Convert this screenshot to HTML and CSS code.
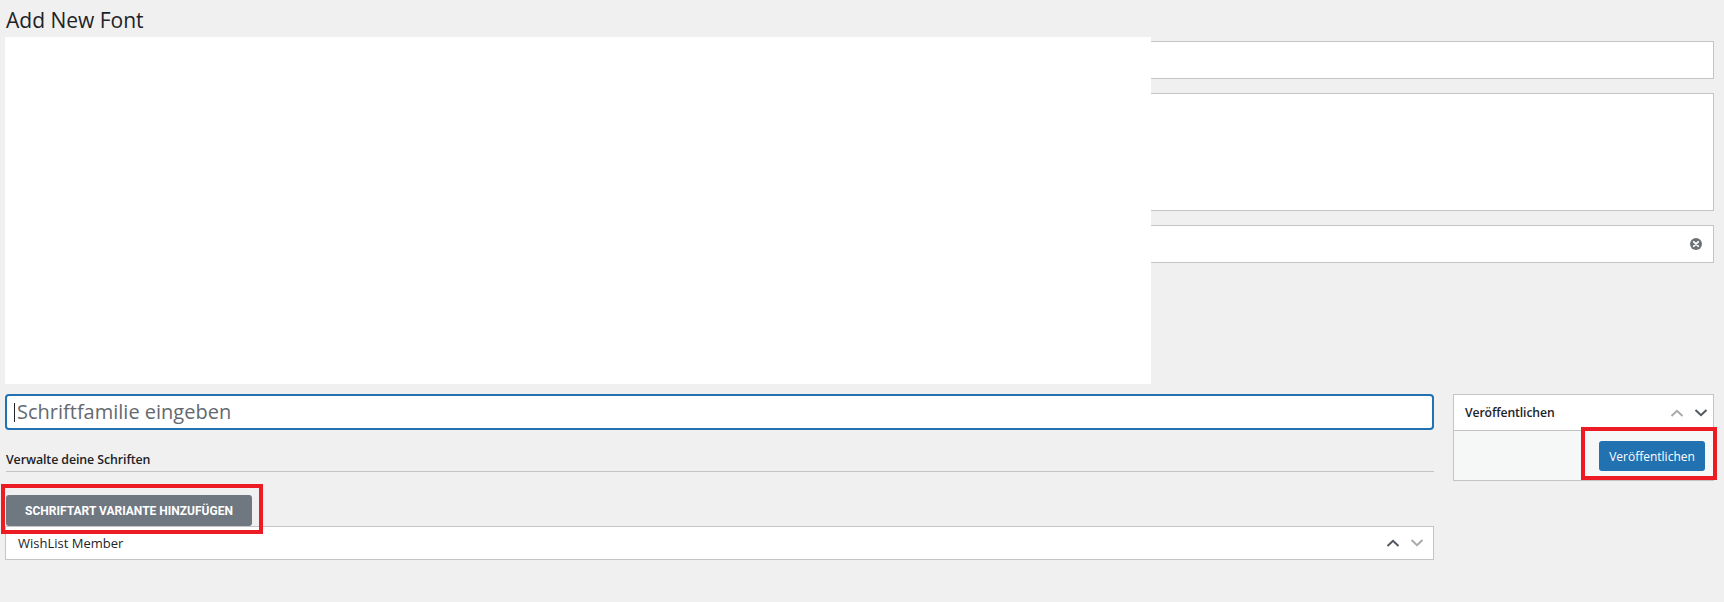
FILE: index.html
```html
<!DOCTYPE html>
<html lang="de">
<head>
    <meta charset="UTF-8">
    <title>Add New Font</title>
    <link rel="stylesheet" href="styles.css">
</head>
<body>
    <div class="wrap">
        <h1 class="page-title">Add New Font</h1>

        <div class="top-fields">
            <div class="field"></div>
            <div class="field field-area"></div>
            <div class="field field-clear">
                <span class="clear-icon">
                    <svg width="12" height="12" viewBox="0 0 12 12">
                        <circle cx="6" cy="6" r="6" fill="#6d7178"/>
                        <path d="M3.8 3.8 L8.2 8.2 M8.2 3.8 L3.8 8.2" stroke="#fff" stroke-width="1.8" stroke-linecap="round"/>
                    </svg>
                </span>
            </div>
        </div>

        <div class="columns">
            <main class="main-col">
                <div class="family">
                    <input type="text" class="family-input" placeholder="Schriftfamilie eingeben">
                    <span class="caret"></span>
                </div>

                <h2 class="section-title">Verwalte deine Schriften</h2>

                <div class="variant-row">
                    <button class="variant-button">Schriftart Variante hinzufügen</button>
                    <span class="mark mark-variant"></span>
                </div>

                <div class="postbox">
                    <span class="postbox-title">WishList Member</span>
                    <span class="toggles">
                        <svg class="chev" width="14" height="8" viewBox="0 0 14 8"><path d="M1.5 7 L7 1.8 L12.5 7" fill="none" stroke="#50575e" stroke-width="2"/></svg>
                        <svg class="chev" width="14" height="8" viewBox="0 0 14 8"><path d="M1.5 1 L7 6.2 L12.5 1" fill="none" stroke="#a7aaad" stroke-width="2"/></svg>
                    </span>
                </div>
            </main>

            <aside class="side-col">
                <div class="side-box">
                    <div class="side-head">
                        <span class="side-title">Veröffentlichen</span>
                        <span class="toggles">
                            <svg class="chev" width="14" height="8" viewBox="0 0 14 8"><path d="M1.5 7 L7 1.8 L12.5 7" fill="none" stroke="#a7aaad" stroke-width="2"/></svg>
                            <svg class="chev" width="14" height="8" viewBox="0 0 14 8"><path d="M1.5 1 L7 6.2 L12.5 1" fill="none" stroke="#50575e" stroke-width="2"/></svg>
                        </span>
                    </div>
                    <div class="side-body">
                        <button class="publish-button">Veröffentlichen</button>
                    </div>
                    <span class="mark mark-publish"></span>
                </div>
            </aside>
        </div>

        <div class="redacted"></div>
    </div>
</body>
</html>
```

FILE: styles.css
```css
body {
    margin: 0;
    padding: 0;
    background-color: #f0f0f1;
    color: #1d2327;
    font-family: 'Open Sans', 'Noto Sans', sans-serif;
    font-size: 13px;
}
.wrap {
    position: relative;
    padding: 0 10px 0 5px;
}
.page-title {
    margin: 0 0 1px 1px;
    font-size: 21px;
    font-weight: 400;
    line-height: 40px;
    color: #1d2327;
}
.top-fields {
    display: flex;
    flex-direction: column;
    gap: 14px;
}
.field {
    height: 36px;
    background-color: #fff;
    border: 1px solid #c3c4c7;
}
.field-area {
    height: 116px;
}
.field-clear {
    display: flex;
    align-items: center;
    justify-content: flex-end;
    padding-right: 11px;
}
.clear-icon {
    display: flex;
}
.columns {
    display: flex;
    gap: 19px;
    margin-top: 131px;
}
.main-col {
    flex: 1;
    display: flex;
    flex-direction: column;
}
.side-col {
    width: 261px;
}
.family {
    position: relative;
}
.family-input {
    display: block;
    box-sizing: border-box;
    width: 100%;
    height: 36px;
    margin: 0;
    padding: 0 8px 2px 10px;
    border: 2px solid #2271b1;
    border-radius: 4px;
    background-color: #fff;
    font-family: 'Open Sans', 'Noto Sans', sans-serif;
    font-size: 20px;
    outline: none;
}
.family-input::placeholder {
    color: #646970;
}
.caret {
    position: absolute;
    left: 9px;
    top: 9px;
    width: 1px;
    height: 19px;
    background-color: #1d2327;
}
.section-title {
    margin: 21px 0 0 1px;
    padding-bottom: 2px;
    border-bottom: 1px solid #c3c4c7;
    font-size: 12.4px;
    font-weight: 600;
    line-height: 18px;
    letter-spacing: -0.1px;
    color: #1d2327;
}
.variant-row {
    position: relative;
    margin-top: 23px;
    height: 31px;
}
.variant-button {
    display: block;
    width: 246px;
    height: 31px;
    margin-left: 1px;
    padding: 0;
    border: none;
    border-radius: 3px;
    background-color: #6f7780;
    color: #fff;
    font-family: 'Roboto', sans-serif;
    font-size: 12px;
    font-weight: 700;
    text-transform: uppercase;
}
.mark {
    position: absolute;
    border: 4px solid #ed1c24;
    box-sizing: border-box;
}
.mark-variant {
    left: -4px;
    top: -11px;
    width: 262px;
    height: 50px;
}
.postbox {
    display: flex;
    align-items: center;
    justify-content: space-between;
    height: 32px;
    background-color: #fff;
    border: 1px solid #c3c4c7;
    padding: 0 9px 0 12px;
}
.postbox-title {
    font-size: 13px;
    color: #1d2327;
}
.toggles {
    display: flex;
    gap: 10px;
    align-items: center;
}
.chev {
    display: block;
}
.side-box {
    position: relative;
    border: 1px solid #c3c4c7;
    background-color: #f6f7f7;
}
.side-head {
    display: flex;
    align-items: center;
    justify-content: space-between;
    height: 35px;
    padding: 0 5px 0 11px;
    background-color: #fff;
    border-bottom: 1px solid #c3c4c7;
}
.side-title {
    font-size: 12.2px;
    font-weight: 600;
    letter-spacing: -0.1px;
}
.side-body {
    display: flex;
    justify-content: flex-end;
    padding: 10px 8px 9px;
}
.publish-button {
    width: 106px;
    height: 30px;
    padding: 0;
    border: none;
    border-radius: 3px;
    background-color: #2271b1;
    color: #fff;
    font-family: 'Open Sans', 'Noto Sans', sans-serif;
    font-size: 12px;
}
.mark-publish {
    left: 127px;
    top: 32px;
    width: 136px;
    height: 53px;
}
.redacted {
    position: absolute;
    left: 5px;
    top: 37px;
    width: 1146px;
    height: 347px;
    background-color: #fff;
}
```
